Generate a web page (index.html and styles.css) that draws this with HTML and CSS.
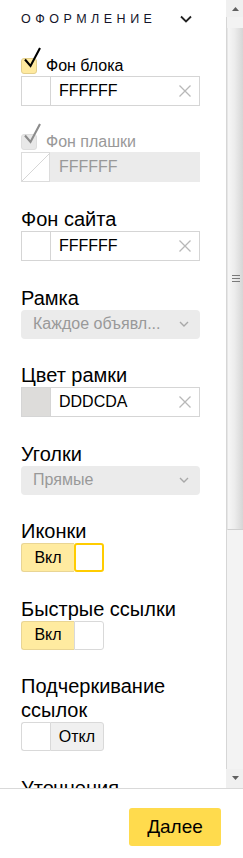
FILE: index.html
```html
<!DOCTYPE html>
<html lang="ru">
<head>
<meta charset="utf-8">
<title>Оформление</title>
<link rel="stylesheet" href="styles.css">
</head>
<body>
<div class="panel">
  <div class="main">
    <div class="content">
      <div class="head">
        <span class="head-title">ОФОРМЛЕНИЕ</span>
        <svg class="head-chev" width="12" height="8" viewBox="0 0 12 8"><path d="M1 1.5 L6 6.5 L11 1.5" fill="none" stroke="#222" stroke-width="1.8"/></svg>
      </div>

      <div class="check-row">
        <span class="box">
          <svg class="tick" width="24" height="24" viewBox="0 0 24 24"><path d="M3 12.5 L8.5 19 L18 1" fill="none" stroke="#000" stroke-width="2.1"/></svg>
        </span>
        <span class="check-label">Фон блока</span>
      </div>
      <div class="color-input">
        <span class="swatch"></span>
        <span class="color-value">FFFFFF</span>
        <svg class="clear" width="12" height="12" viewBox="0 0 12 12"><path d="M0.5 0.5 L11.5 11.5 M11.5 0.5 L0.5 11.5" stroke="#b8b8b8" stroke-width="1.3"/></svg>
      </div>

      <div class="check-row disabled">
        <span class="box">
          <svg class="tick" width="24" height="24" viewBox="0 0 24 24"><path d="M3 12.5 L8.5 19 L18 1" fill="none" stroke="#8c8c8c" stroke-width="2.1"/></svg>
        </span>
        <span class="check-label">Фон плашки</span>
      </div>
      <div class="color-input disabled">
        <span class="swatch">
          <svg width="28" height="28" viewBox="0 0 28 28"><path d="M0 28 L28 0" stroke="#d6d6d6" stroke-width="1"/></svg>
        </span>
        <span class="color-value">FFFFFF</span>
      </div>

      <div class="field">
        <div class="field-label">Фон сайта</div>
        <div class="color-input">
          <span class="swatch"></span>
          <span class="color-value">FFFFFF</span>
          <svg class="clear" width="12" height="12" viewBox="0 0 12 12"><path d="M0.5 0.5 L11.5 11.5 M11.5 0.5 L0.5 11.5" stroke="#b8b8b8" stroke-width="1.3"/></svg>
        </div>
      </div>

      <div class="field">
        <div class="field-label">Рамка</div>
        <div class="select">
          <span class="select-text">Каждое объявл...</span>
          <svg class="select-chev" width="10" height="6" viewBox="0 0 10 6"><path d="M1 1 L5 5 L9 1" fill="none" stroke="#a8a8a8" stroke-width="1.4"/></svg>
        </div>
      </div>

      <div class="field">
        <div class="field-label">Цвет рамки</div>
        <div class="color-input">
          <span class="swatch grey"></span>
          <span class="color-value">DDDCDA</span>
          <svg class="clear" width="12" height="12" viewBox="0 0 12 12"><path d="M0.5 0.5 L11.5 11.5 M11.5 0.5 L0.5 11.5" stroke="#b8b8b8" stroke-width="1.3"/></svg>
        </div>
      </div>

      <div class="field">
        <div class="field-label">Уголки</div>
        <div class="select">
          <span class="select-text">Прямые</span>
          <svg class="select-chev" width="10" height="6" viewBox="0 0 10 6"><path d="M1 1 L5 5 L9 1" fill="none" stroke="#a8a8a8" stroke-width="1.4"/></svg>
        </div>
      </div>

      <div class="field">
        <div class="field-label">Иконки</div>
        <div class="toggle">
          <span class="seg seg-on">Вкл</span>
          <span class="seg seg-knob focused"></span>
        </div>
      </div>

      <div class="field">
        <div class="field-label">Быстрые ссылки</div>
        <div class="toggle">
          <span class="seg seg-on">Вкл</span>
          <span class="seg seg-knob"></span>
        </div>
      </div>

      <div class="field">
        <div class="field-label">Подчеркивание ссылок</div>
        <div class="toggle">
          <span class="seg seg-knob left"></span>
          <span class="seg seg-off">Откл</span>
        </div>
      </div>

      <div class="field">
        <div class="field-label">Уточнения</div>
      </div>
    </div>

    <div class="scrollbar">
      <div class="sb-btn">
        <svg width="7" height="4" viewBox="0 0 7 4"><path d="M0 4 L3.5 0 L7 4 Z" fill="#606060"/></svg>
      </div>
      <div class="sb-track">
        <div class="sb-thumb">
          <span class="grip"></span><span class="grip"></span><span class="grip"></span>
        </div>
      </div>
      <div class="sb-btn down">
        <svg width="7" height="4" viewBox="0 0 7 4"><path d="M0 0 L3.5 4 L7 0 Z" fill="#606060"/></svg>
      </div>
    </div>
  </div>

  <div class="footer">
    <button class="next">Далее</button>
  </div>
</div>
</body>
</html>
```
FILE: styles.css
```css
* { box-sizing: border-box; }

html, body {
  margin: 0;
  padding: 0;
}

body {
  width: 243px;
  height: 858px;
  overflow: hidden;
  background: #fff;
  color: #000;
  font-family: "Liberation Sans", Arial, sans-serif;
}

.panel {
  display: flex;
  flex-direction: column;
  height: 858px;
}

.main {
  display: flex;
  height: 789px;
  border-bottom: 1px solid #d9d9d9;
}

.content {
  flex: 1;
  overflow: hidden;
  padding-left: 21px;
  padding-right: 26px;
}

/* header */
.head {
  height: 36px;
  display: flex;
  align-items: center;
  justify-content: space-between;
  padding-right: 8px;
  padding-top: 1px;
}

.head-title {
  font-size: 12.5px;
  letter-spacing: 4.5px;
  color: #14142a;
}

.head-chev {
  display: block;
}

/* checkbox rows */
.check-row {
  display: flex;
  align-items: center;
  gap: 9px;
  height: 20px;
  margin-top: 20px;
}

.check-row.disabled {
  margin-top: 26px;
}

.box {
  position: relative;
  width: 16px;
  height: 16px;
  border-radius: 3px;
  background: #ffeaa0;
  border: 1px solid #e3cf8c;
}

.check-row.disabled .box {
  background: #e8e8e8;
  border-color: #dedede;
}

.tick {
  position: absolute;
  left: 0;
  top: -12px;
  overflow: visible;
}

.check-label {
  font-size: 16px;
  line-height: 20px;
}

.check-row.disabled .check-label {
  color: #999;
}

/* colour input */
.color-input {
  display: flex;
  align-items: center;
  height: 30px;
  border: 1px solid #d5d5d5;
  background: #fff;
}

.swatch {
  width: 29px;
  height: 100%;
  border-right: 1px solid #d5d5d5;
  background: #fff;
  flex: none;
}

.swatch.grey {
  background: #dddcda;
}

.color-value {
  flex: 1;
  padding-left: 8px;
  font-size: 16px;
  line-height: 28px;
}

.clear {
  margin-right: 8px;
  flex: none;
}

.color-input.disabled {
  border: none;
  background: #ebebeb;
}

.color-input.disabled .swatch {
  border: 1px solid #dcdcdc;
  background: #fff;
}

.color-input.disabled .swatch svg {
  display: block;
}

.color-input.disabled .color-value {
  color: #999;
  padding-left: 9px;
}

/* fields */
.field {
  margin-top: 25px;
}

.field + .field {
  margin-top: 24.5px;
}

.field-label {
  font-size: 20px;
  line-height: 24px;
}

.select {
  display: flex;
  align-items: center;
  justify-content: space-between;
  height: 29px;
  padding: 0 11px 0 12px;
  border-radius: 4px;
  background: #ebebeb;
}

.select-text {
  font-size: 16px;
  color: #999;
  white-space: nowrap;
}

.select-chev {
  display: block;
}

/* toggles */
.toggle {
  display: flex;
  width: 83px;
  height: 29px;
}

.seg {
  display: flex;
  align-items: center;
  justify-content: center;
  font-size: 16px;
  height: 100%;
}

.seg-on {
  width: 53px;
  background: #ffeba0;
  border: 1px solid #e9d594;
  border-right: none;
  border-radius: 3px 0 0 3px;
}

.seg-knob {
  width: 30px;
  background: #fff;
  border: 1px solid #d9d9d9;
  border-radius: 0 3px 3px 0;
}

.seg-knob.focused {
  border: 2px solid #ffcc00;
  border-radius: 3px;
}

.seg-knob.left {
  width: 29px;
  border-right: none;
  border-radius: 3px 0 0 3px;
}

.seg-off {
  width: 54px;
  background: #f0f0f0;
  border: 1px solid #d9d9d9;
  border-radius: 0 3px 3px 0;
}

/* scrollbar */
.scrollbar {
  width: 17px;
  display: flex;
  flex-direction: column;
  background: #f0f0f0;
}

.sb-btn {
  height: 17px;
  display: flex;
  align-items: center;
  justify-content: center;
  padding-left: 1px;
}

.sb-btn.down {
  height: 19px;
  padding-bottom: 2px;
}

.sb-track {
  flex: 1;
  padding-top: 11px;
  border-left: 1px solid #d6d6d6;
  background: #f3f3f3;
}

.sb-thumb {
  height: 502px;
  display: flex;
  flex-direction: column;
  align-items: center;
  justify-content: center;
  gap: 2px;
  background: linear-gradient(to right, #f6f6f6 0%, #ececec 45%, #d6d6d6 100%);
  border-left: 1px solid #e6e6e6;
  border-bottom: 1px solid #cfcfcf;
}

.grip {
  display: block;
  width: 8px;
  height: 1px;
  background: #7a7a7a;
}

/* footer */
.footer {
  flex: 1;
  display: flex;
  justify-content: flex-end;
  align-items: flex-start;
  padding: 19px 22px 0 0;
}

.next {
  width: 92px;
  height: 38px;
  border: none;
  border-radius: 3px;
  background: #ffdb4d;
  color: #000;
  font-family: "Liberation Sans", Arial, sans-serif;
  font-size: 19px;
  padding: 0;
}
```
